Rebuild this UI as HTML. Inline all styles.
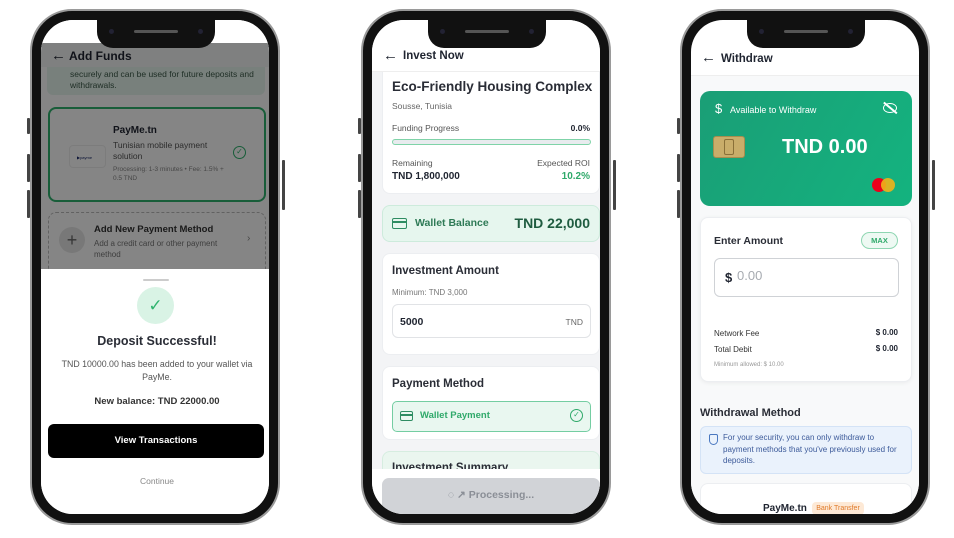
<!DOCTYPE html>
<html><head><meta charset="utf-8"><style>
*{margin:0;padding:0;box-sizing:border-box}
body{width:954px;height:538px;background:#fff;position:relative;overflow:hidden;font-family:"Liberation Sans",sans-serif;color:#1f2430}
.ph{position:absolute;top:9px;width:250px;height:516px;border-radius:42px;background:#111;border:2px solid #9a9a9a}
.scr{position:absolute;left:9px;top:9px;right:9px;bottom:9px;border-radius:32px;background:#fff;overflow:hidden}
.notch{position:absolute;left:56px;top:0;width:118px;height:28px;background:#111;border-radius:0 0 16px 16px;z-index:5}
.notch i{position:absolute;top:9px;width:5px;height:5px;border-radius:50%;background:#223}
.notch b{position:absolute;left:37px;top:10px;width:44px;height:3px;border-radius:2px;background:#555}
.btn{position:absolute;width:3px;background:#444;border-radius:1px}
.a{position:absolute}
.b{font-weight:bold}
.card{position:absolute;background:#fff;border-radius:8px;border:1px solid #eceef1}
</style></head><body>

<!-- PHONE 1 -->
<div class="btn" style="left:27px;top:118px;height:16px"></div>
<div class="btn" style="left:27px;top:154px;height:28px"></div>
<div class="btn" style="left:27px;top:190px;height:28px"></div>
<div class="btn" style="left:282px;top:160px;height:50px"></div>
<div class="ph" style="left:30px">
<div class="scr">
 <div class="notch"><i style="left:12px"></i><b></b><i style="right:12px"></i></div>
 <div class="a" style="left:0;top:0;width:232px;height:260px;background:#fff">
  <div class="a" style="left:0;top:23px;width:232px;height:24px;background:#f4f5f6"></div>
  <div class="a b" style="left:10px;top:27px;font-size:15px">←</div>
  <div class="a b" style="left:28px;top:29px;font-size:12px">Add Funds</div>
  <div class="a" style="left:6px;top:47px;width:218px;height:28px;background:#e7f6ee;border-radius:0 0 6px 6px;font-size:8.5px;color:#3d5a4a;padding:2px 0 0 23px;line-height:11px">securely and can be used for future deposits and<br>withdrawals.</div>
  <div class="a" style="left:7px;top:87px;width:218px;height:95px;border:2px solid #2fb36e;border-radius:8px;background:#fff">
   <div class="a" style="left:19px;top:36px;width:37px;height:23px;border:1px solid #eee;border-radius:4px;font-size:4px;color:#1a2a6a;padding:9px 0 0 7px">▶payme</div>
   <div class="a b" style="left:63px;top:16px;font-size:10px">PayMe.tn</div>
   <div class="a" style="left:63px;top:31px;font-size:8.5px;color:#555;line-height:11px">Tunisian mobile payment<br>solution</div>
   <div class="a" style="left:63px;top:56px;font-size:6.5px;color:#888;line-height:9px">Processing: 1-3 minutes • Fee: 1.5% +<br>0.5 TND</div>
   <div class="a" style="left:183px;top:37px;width:13px;height:13px;border:1.6px solid #2fb36e;border-radius:50%;font-size:8px;color:#2fb36e;text-align:center;line-height:10px">✓</div>
  </div>
  <div class="a" style="left:7px;top:192px;width:218px;height:68px;border:1.5px dashed #bbb;border-radius:8px">
   <div class="a" style="left:10px;top:14px;width:26px;height:26px;border-radius:50%;background:#e6e6e6;text-align:center;font-size:18px;line-height:26px;color:#666">+</div>
   <div class="a b" style="left:45px;top:11px;font-size:9.5px;color:#333">Add New Payment Method</div>
   <div class="a" style="left:45px;top:25px;font-size:8px;color:#777;line-height:11px">Add a credit card or other payment<br>method</div>
   <div class="a" style="left:198px;top:20px;font-size:10px;color:#888">›</div>
  </div>
  <div class="a" style="left:0;top:23px;width:232px;height:240px;background:rgba(0,0,0,0.48)"></div>
 </div>
 <div class="a" style="left:0;top:249px;width:232px;height:260px;background:#fff">
  <div class="a" style="left:102px;top:10px;width:26px;height:2px;background:#ccc;border-radius:1px"></div>
  <div class="a" style="left:96px;top:18px;width:37px;height:37px;border-radius:50%;background:#d9f3e5;text-align:center;font-size:17px;line-height:37px;color:#2fb36e">✓</div>
  <div class="a b" style="left:0;width:232px;top:65px;text-align:center;font-size:12.5px;color:#2a2d36">Deposit Successful!</div>
  <div class="a" style="left:0;width:232px;top:89px;text-align:center;font-size:8.8px;color:#555;line-height:13px">TND 10000.00 has been added to your wallet via<br>PayMe.</div>
  <div class="a b" style="left:0;width:232px;top:127px;text-align:center;font-size:9.5px;color:#333">New balance: TND 22000.00</div>
  <div class="a b" style="left:7px;top:155px;width:216px;height:34px;background:#000;border-radius:6px;color:#fff;text-align:center;line-height:34px;font-size:9.5px">View Transactions</div>
  <div class="a" style="left:0;width:232px;top:207px;text-align:center;font-size:8.5px;color:#888">Continue</div>
 </div>
</div></div>

<!-- PHONE 2 -->
<div class="btn" style="left:358px;top:118px;height:16px"></div>
<div class="btn" style="left:358px;top:154px;height:28px"></div>
<div class="btn" style="left:358px;top:190px;height:28px"></div>
<div class="btn" style="left:613px;top:160px;height:50px"></div>
<div class="ph" style="left:361px">
<div class="scr" style="background:#f3f4f6">
 <div class="notch"><i style="left:12px"></i><b></b><i style="right:12px"></i></div>
 <div class="a" style="left:0;top:0;width:232px;height:52px;background:#fff;border-bottom:1px solid #eee"></div>
 <div class="a b" style="left:11px;top:27px;font-size:15px">←</div>
 <div class="a b" style="left:31px;top:30px;font-size:11.5px">Invest Now</div>
 <div class="card" style="left:10px;top:52px;width:218px;height:122px;border-top:none;border-radius:0 0 8px 8px">
  <div class="a b" style="left:9px;top:7px;font-size:13.5px;color:#2a2d36">Eco-Friendly Housing Complex</div>
  <div class="a" style="left:9px;top:29px;font-size:8.5px;color:#666">Sousse, Tunisia</div>
  <div class="a" style="left:9px;top:51px;font-size:8.5px;color:#555">Funding Progress</div>
  <div class="a b" style="right:9px;top:51px;font-size:8.5px">0.0%</div>
  <div class="a" style="left:9px;top:67px;width:199px;height:6px;border:1px solid #7fd3a8;border-radius:3px;background:#e8ebee"></div>
  <div class="a" style="left:9px;top:86px;font-size:8.5px;color:#555">Remaining</div>
  <div class="a" style="right:9px;top:86px;font-size:8.5px;color:#555">Expected ROI</div>
  <div class="a b" style="left:9px;top:99px;font-size:10px">TND 1,800,000</div>
  <div class="a b" style="right:9px;top:99px;font-size:10px;color:#2fa96a">10.2%</div>
 </div>
 <div class="a" style="left:10px;top:185px;width:218px;height:37px;background:#e6f6ee;border:1px solid #cdebdc;border-radius:8px">
  <div class="a" style="left:9px;top:12px;width:15px;height:11px;border:1.6px solid #2e8c62;border-radius:2px"><div style="margin-top:2px;height:1.5px;background:#2e8c62"></div></div>
  <div class="a b" style="left:32px;top:11px;font-size:10.5px;color:#2e7a56">Wallet Balance</div>
  <div class="a b" style="right:9px;top:9px;font-size:14px;color:#1f5c40">TND 22,000</div>
 </div>
 <div class="card" style="left:10px;top:233px;width:218px;height:102px">
  <div class="a b" style="left:9px;top:11px;font-size:11.5px;color:#2a2d36">Investment Amount</div>
  <div class="a" style="left:9px;top:34px;font-size:8px;color:#777">Minimum: TND 3,000</div>
  <div class="a" style="left:9px;top:50px;width:199px;height:34px;border:1px solid #e1e3e6;border-radius:6px">
   <div class="a b" style="left:7px;top:11px;font-size:10.5px">5000</div>
   <div class="a" style="right:7px;top:12px;font-size:8.5px;color:#666">TND</div>
  </div>
 </div>
 <div class="card" style="left:10px;top:346px;width:218px;height:74px">
  <div class="a b" style="left:9px;top:11px;font-size:11.5px;color:#2a2d36">Payment Method</div>
  <div class="a" style="left:9px;top:34px;width:199px;height:31px;background:#e9f7f0;border:1.5px solid #74cda2;border-radius:5px">
   <div class="a" style="left:7px;top:9px;width:13px;height:10px;border:1.5px solid #2e8c62;border-radius:2px"><div style="margin-top:2px;height:1.5px;background:#2e8c62"></div></div>
   <div class="a b" style="left:27px;top:8px;font-size:9.5px;color:#2fa96a">Wallet Payment</div>
   <div class="a" style="right:7px;top:7px;width:13px;height:13px;border:1.5px solid #2fa96a;border-radius:50%;font-size:8px;color:#2fa96a;text-align:center;line-height:10px">✓</div>
  </div>
 </div>
 <div class="a" style="left:10px;top:431px;width:218px;height:30px;background:#eaf6ef;border:1px solid #d6ede0;border-radius:8px">
  <div class="a b" style="left:9px;top:10px;font-size:11.5px;color:#2a2d36">Investment Summary</div>
 </div>
 <div class="a" style="left:0;top:449px;width:232px;height:60px;background:#fff"></div>
 <div class="a b" style="left:10px;top:458px;width:218px;height:36px;background:#d1d3d7;border-radius:7px;text-align:center;line-height:34px;font-size:10.5px;color:#8a8e96">◌ ↗ Processing...</div>
</div></div>

<!-- PHONE 3 -->
<div class="btn" style="left:677px;top:118px;height:16px"></div>
<div class="btn" style="left:677px;top:154px;height:28px"></div>
<div class="btn" style="left:677px;top:190px;height:28px"></div>
<div class="btn" style="left:932px;top:160px;height:50px"></div>
<div class="ph" style="left:680px">
<div class="scr">
 <div class="notch"><i style="left:12px"></i><b></b><i style="right:12px"></i></div>
 <div class="a" style="left:0;top:55px;width:232px;height:460px;background:#f8f9fa"></div>
 <div class="a" style="left:0;top:55px;width:232px;height:1px;background:#eee"></div>
 <div class="a b" style="left:10px;top:29px;font-size:15px">←</div>
 <div class="a b" style="left:30px;top:33px;font-size:11.5px">Withdraw</div>
 <div class="a" style="left:9px;top:71px;width:212px;height:115px;border-radius:10px;background:linear-gradient(120deg,#1a9e76,#14b37f)">
  <div class="a" style="left:15px;top:10px;font-size:13px;color:#fff">$</div>
  <div class="a" style="left:30px;top:14px;font-size:9px;color:#fff">Available to Withdraw</div>
  <div class="a" style="left:183px;top:12px;width:14px;height:10px;border:1.5px solid #fff;border-radius:50%"></div>
  <div class="a" style="left:182px;top:16px;width:17px;height:1.5px;background:#fff;transform:rotate(40deg)"></div>
  <div class="a" style="left:13px;top:45px;width:32px;height:22px;background:#c9ad6a;border-radius:3px;border:1px solid #a88d4e"><div class="a" style="left:10px;top:2px;width:10px;height:16px;border:1px solid #8a7038;border-radius:2px"></div></div>
  <div class="a b" style="left:82px;top:45px;font-size:20px;color:#fff">TND 0.00</div>
  <div class="a" style="left:172px;top:87px;width:14px;height:14px;border-radius:50%;background:#eb001b"></div>
  <div class="a" style="left:181px;top:87px;width:14px;height:14px;border-radius:50%;background:#f0b31a;opacity:.9"></div>
 </div>
 <div class="card" style="left:9px;top:197px;width:212px;height:165px;box-shadow:0 1px 4px rgba(0,0,0,.06)">
  <div class="a b" style="left:13px;top:17px;font-size:10.5px;color:#2a2d36">Enter Amount</div>
  <div class="a b" style="left:160px;top:14px;width:37px;height:17px;border:1px solid #8fd6b2;border-radius:9px;background:#eef9f3;color:#2fa96a;font-size:7.5px;text-align:center;line-height:15px">MAX</div>
  <div class="a" style="left:13px;top:40px;width:185px;height:39px;border:1.5px solid #cfd2d6;border-radius:6px">
   <div class="a b" style="left:10px;top:11px;font-size:13px">$</div>
   <div class="a" style="left:22px;top:9px;font-size:13px;color:#a7abb1">0.00</div>
  </div>
  <div class="a" style="left:13px;top:111px;font-size:8px;color:#333">Network Fee</div>
  <div class="a b" style="right:13px;top:110px;font-size:8px">$ 0.00</div>
  <div class="a" style="left:13px;top:127px;font-size:8px;color:#333">Total Debit</div>
  <div class="a b" style="right:13px;top:126px;font-size:8px">$ 0.00</div>
  <div class="a" style="left:13px;top:144px;font-size:6px;color:#999">Minimum allowed: $ 10.00</div>
 </div>
 <div class="a b" style="left:9px;top:387px;font-size:11px;color:#2a2d36">Withdrawal Method</div>
 <div class="a" style="left:9px;top:406px;width:212px;height:48px;background:#eaf2fc;border:1px solid #d4e3f6;border-radius:6px">
  <div class="a" style="left:8px;top:7px;width:9px;height:11px;border:1.3px solid #4a78c0;border-radius:2px 2px 5px 5px"></div>
  <div class="a" style="left:22px;top:5px;font-size:8px;color:#3c5a9a;line-height:11.5px">For your security, you can only withdraw to<br>payment methods that you've previously used for<br>deposits.</div>
 </div>
 <div class="card" style="left:9px;top:463px;width:212px;height:60px">
  <div class="a b" style="left:62px;top:19px;font-size:10px">PayMe.tn</div>
  <div class="a" style="left:111px;top:18px;width:52px;height:13px;background:#fde9d6;border-radius:4px;color:#e07a2a;font-size:7px;text-align:center;line-height:13px">Bank Transfer</div>
 </div>
</div></div>

</body></html>
